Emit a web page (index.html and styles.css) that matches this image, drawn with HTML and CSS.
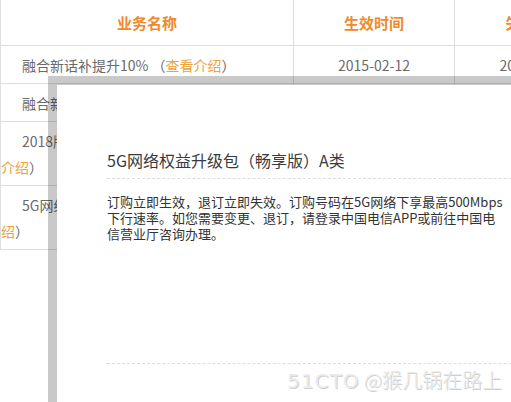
FILE: index.html
```html
<!DOCTYPE html>
<html lang="zh-CN">
<head>
<meta charset="utf-8">
<title>业务列表</title>
<link rel="stylesheet" href="styles.css">
</head>
<body>
<table class="biz">
  <colgroup><col class="c1"><col class="c2"><col class="c3"></colgroup>
  <thead>
    <tr><th>业务名称</th><th>生效时间</th><th>失效时间</th></tr>
  </thead>
  <tbody>
    <tr><td class="name">融合新话补提升10% （<a class="lnk">查看介绍</a>）</td><td>2015-02-12</td><td>2015-12-31</td></tr>
    <tr><td class="name">融合新话补提升20% （<a class="lnk">查看介绍</a>）</td><td>2015-02-12</td><td>2015-12-31</td></tr>
    <tr><td class="name">2018版天翼畅享融合套餐199元档（查看<br><a class="lnk">介绍</a>）</td><td>2018-01-01</td><td>2018-12-31</td></tr>
    <tr><td class="name">5G网络权益升级包（畅享版）A类 （查看介<br><a class="lnk">绍</a>）</td><td>2019-11-01</td><td>2020-12-31</td></tr>
  </tbody>
</table>

<div class="modal">
  <div class="modal-inner">
    <h3 class="modal-title">5G网络权益升级包（畅享版）A类</h3>
    <p class="modal-text">订购立即生效，退订立即失效。订购号码在5G网络下享最高500Mbps<br>下行速率。如您需要变更、退订，请登录中国电信APP或前往中国电<br>信营业厅咨询办理。</p>
    <div class="modal-foot"></div>
  </div>
</div>

<div class="watermark"><span class="wm-logo">51CTO</span> @猴几锅在路上</div>
</body>
</html>
```

FILE: styles.css
```css
html, body {
  margin: 0;
  padding: 0;
  background: #fff;
  overflow: hidden;
}
body {
  font-family: "Noto Sans CJK SC", "Noto Sans", sans-serif;
  color: #666;
  width: 511px;
  height: 402px;
  position: relative;
}
.biz {
  border-collapse: collapse;
  width: 616px;
  table-layout: fixed;
  font-size: 14px;
}
.c1 { width: 293px; }
.c2 { width: 161px; }
.c3 { width: 162px; }
.biz th, .biz td {
  border: 1px solid #dedede;
  text-align: center;
  font-weight: normal;
}
.biz th {
  border-top: none;
  height: 45px;
  padding: 0;
  color: #f0892a;
  font-size: 15px;
  font-weight: bold;
  line-height: 45px;
}
.biz td {
  padding: 6px 0 5px;
  line-height: 26px;
  color: #6a6a6a;
}
.biz td.name {
  text-align: left;
  text-indent: 21px;
}
.lnk {
  color: #eda23a;
  text-decoration: none;
}
.modal {
  position: absolute;
  left: 48px;
  top: 76px;
  width: 540px;
  height: 400px;
  border: 9px solid rgba(0, 0, 0, 0.21);
  background: #fff;
  background-clip: padding-box;
}
.modal-inner {
  padding: 63px 0 0 50px;
}
.modal-title {
  margin: 0;
  font-size: 16px;
  font-weight: normal;
  line-height: 24px;
  color: #3a3a3a;
  padding-bottom: 6px;
  border-bottom: 1px dashed #dcdcdc;
}
.modal-text {
  margin: 15px 0 0;
  font-size: 13px;
  line-height: 16px;
  color: #333;
  white-space: nowrap;
  height: 169px;
}
.modal-foot {
  border-top: 1px dashed #dcdcdc;
}
.watermark {
  position: absolute;
  right: 9px;
  top: 366px;
  font-size: 20px;
  line-height: 28px;
  font-weight: 300;
  color: #ebebeb;
  text-shadow: 1px 1px 0 #cfcfcf;
  white-space: nowrap;
}
.wm-logo {
  font-family: "DejaVu Sans", sans-serif;
  font-weight: normal;
  letter-spacing: 1px;
}
```
